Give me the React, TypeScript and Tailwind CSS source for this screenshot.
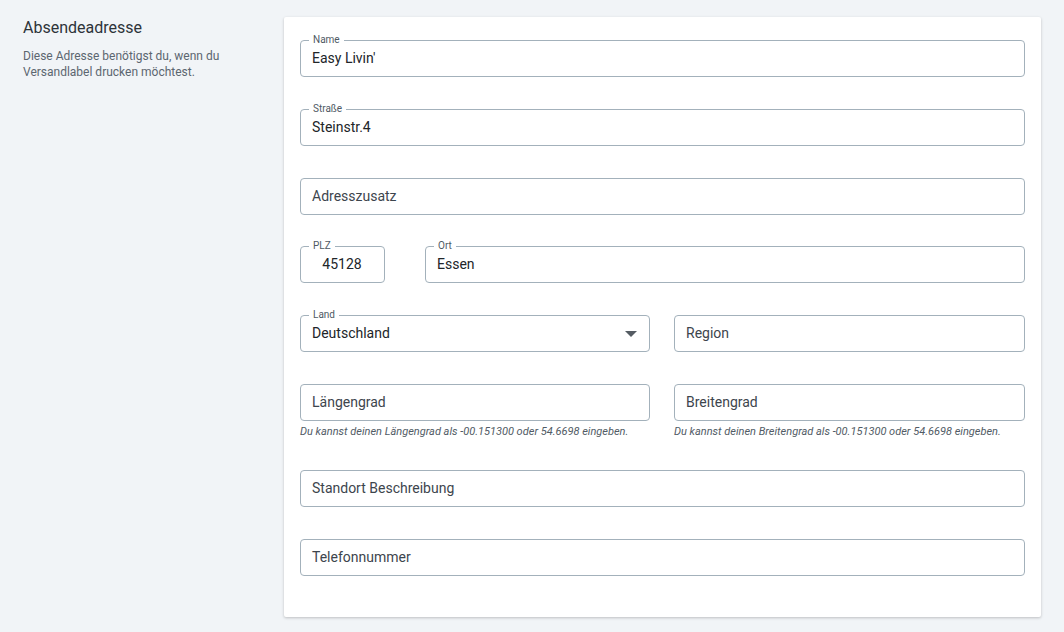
import React from "react";

interface FieldProps {
  label?: string;
  value?: string;
  placeholder?: string;
  center?: boolean;
  select?: boolean;
  hint?: string;
  className?: string;
}

function Field({ label, value, placeholder, center, select, hint, className = "" }: FieldProps) {
  return (
    <div className={`flex flex-col ${className}`}>
      <div className="relative h-[37px] rounded-[4px] border border-[#a3b1bb] bg-white flex items-center pl-[11px] pr-3">
        {label && (
          <span className="absolute -top-[8px] left-[8px] bg-white px-[4px] text-[10px] leading-[14px] text-[#4f5a64]">
            {label}
          </span>
        )}
        <span
          className={`flex-1 text-[14px] ${center ? "text-center" : ""} ${
            value ? "text-[#212529]" : "text-[#3d454d]"
          }`}
        >
          {value ?? placeholder}
        </span>
        {select && (
          <svg width="12" height="6" viewBox="0 0 12 6">
            <path d="M0 0h12L6 6z" fill="#555c63" />
          </svg>
        )}
      </div>
      {hint && (
        <p className="mt-[4px] text-[11px] leading-[13px] italic text-[#515b65] whitespace-nowrap">
          {hint}
        </p>
      )}
    </div>
  );
}

export default function App() {
  return (
    <div
      className="min-h-[632px] bg-[#f1f4f7] flex pl-[23px] pt-[17px] pr-[23px] pb-[14px]"
      style={{ fontFamily: "Roboto, 'Noto Sans', sans-serif" }}
    >
      <div className="w-[261px] shrink-0">
        <h2 className="text-[16px] leading-[20px] text-[#2d3339] mt-[1px]">Absendeadresse</h2>
        <p className="mt-[10px] text-[12px] leading-[16px] text-[#5c6670]">
          Diese Adresse benötigst du, wenn du Versandlabel drucken möchtest.
        </p>
      </div>
      <div className="w-[757px] h-[600px] bg-white rounded-[2px] shadow-[0_1px_3px_rgba(0,0,0,0.22)] px-4 pt-[23px] pb-[41px] flex flex-col gap-8">
        <Field label="Name" value="Easy Livin'" />
        <Field label="Straße" value="Steinstr.4" />
        <Field placeholder="Adresszusatz" />
        <div className="flex gap-10 -mt-px">
          <Field label="PLZ" value="45128" center className="w-[85px]" />
          <Field label="Ort" value="Essen" className="flex-1" />
        </div>
        <div className="grid grid-cols-[350px_1fr] gap-6">
          <Field label="Land" value="Deutschland" select />
          <Field placeholder="Region" />
        </div>
        <div className="grid grid-cols-[350px_1fr] gap-6">
          <Field
            placeholder="Längengrad"
            hint="Du kannst deinen Längengrad als -00.151300 oder 54.6698 eingeben."
          />
          <Field
            placeholder="Breitengrad"
            hint="Du kannst deinen Breitengrad als -00.151300 oder 54.6698 eingeben."
          />
        </div>
        <Field placeholder="Standort Beschreibung" />
        <Field placeholder="Telefonnummer" />
      </div>
    </div>
  );
}
